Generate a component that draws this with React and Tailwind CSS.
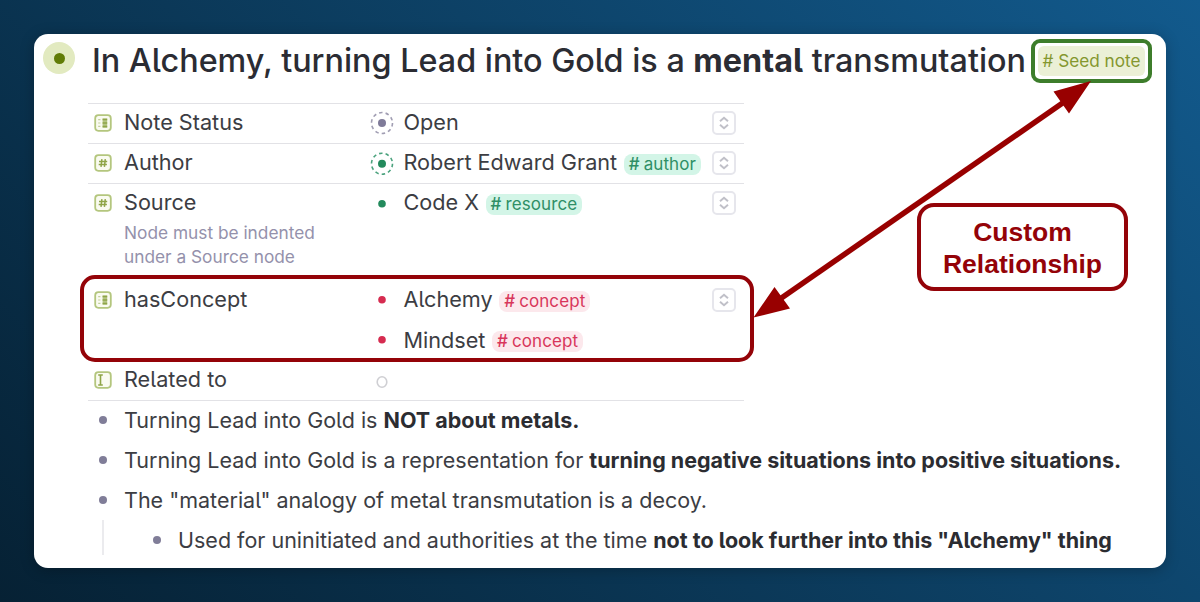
const FIELDS = [
  { name: 'Note Status', icon: 'options', values: [{ text: 'Open', dot: 'gray' }], menu: true },
  { name: 'Author', icon: 'tag', values: [{ text: 'Robert Edward Grant', tag: 'author', dot: 'ref' }], menu: true },
  {
    name: 'Source',
    icon: 'tag',
    hint: ['Node must be indented', 'under a Source node'],
    values: [{ text: 'Code X', tag: 'resource', dot: 'green' }],
    menu: true,
  },
  {
    name: 'hasConcept',
    icon: 'options',
    highlighted: true,
    values: [
      { text: 'Alchemy', tag: 'concept', dot: 'red' },
      { text: 'Mindset', tag: 'concept', dot: 'red' },
    ],
    menu: true,
  },
  { name: 'Related to', icon: 'text', values: [{ dot: 'empty' }] },
]

const TAG_COLORS = {
  author: 'bg-[#d3f5e7] text-[#2f8f66]',
  resource: 'bg-[#d3f5e7] text-[#2f8f66]',
  concept: 'bg-[#fce8ec] text-[#d8365b]',
}

function FieldIcon({ type }) {
  return (
    <svg width="18" height="18" viewBox="0 0 18 18" fill="none" stroke="#8fa548" strokeWidth="1.2">
      <rect x="1.2" y="1.2" width="15.6" height="15.6" rx="3.2" stroke="#b4c67e" strokeWidth="1.8" fill="#fafbf1" />
      {type === 'options' && (
        <>
          <rect x="8.6" y="4.4" width="4.6" height="9.4" fill="#b5c584" stroke="none" />
          <path d="M8.600 5.600h4.600M8.600 9h4.600M8.600 12.400h4.600" strokeWidth="1.5" />
          <path d="M4.200 5.600h2.200M4.200 9h2.200M4.200 12.400h2.200" stroke="#c3d09a" />
        </>
      )}
      {type === 'tag' && <path d="M7.900 5.200 7 12.800M11.300 5.200l-.9 7.600M5 7.500h8.200M4.700 10.600h8.200" strokeWidth="1.5" />}
      {type === 'text' && <path d="M6.500 4v10M4.200 4h4.600M4.200 14h4.600" strokeWidth="1.6" />}
    </svg>
  )
}

function Dot({ type }) {
  return (
    <svg width="24" height="24" viewBox="0 0 24 24" fill="none">
      {type === 'gray' && (
        <>
          <circle cx="12" cy="12" r="10.5" stroke="#a19eb3" strokeWidth="1.6" strokeDasharray="3.5 3.1" />
          <circle cx="12" cy="12" r="4" fill="#7f7b99" />
        </>
      )}
      {type === 'ref' && (
        <>
          <circle cx="12" cy="12.700" r="10.5" stroke="#4aa27d" strokeWidth="1.6" strokeDasharray="3.5 3.1" />
          <circle cx="12" cy="12.700" r="4" fill="#238a5c" />
        </>
      )}
      {type === 'green' && <circle cx="12" cy="12.700" r="3.8" fill="#238a5c" />}
      {type === 'red' && <circle cx="12" cy="11.700" r="3.8" fill="#d62c50" />}
      {type === 'empty' && <ellipse cx="12" cy="14" rx="4.8" ry="5.2" stroke="#cfcfd3" strokeWidth="1.6" />}
    </svg>
  )
}

function Tag({ name }) {
  return (
    <span className={`mt-[3px] ml-[6.5px] flex h-[21px] items-center rounded-[8px] px-[5px] pt-px text-[17px] tracking-[0.1px] ${TAG_COLORS[name]}`}>
      <span className="mr-[4px] font-medium">#</span>
      {name}
    </span>
  )
}

function MenuButton() {
  return (
    <span className="mt-[7px] flex h-[24px] w-[24px] items-center justify-center rounded-[5px] border-2 border-[#e6e6ec]">
      <svg width="12" height="14" viewBox="0 0 12 14" fill="none" stroke="#c0c0c8" strokeWidth="2">
        <path d="M2 5.200 6 1.800l4 3.400M2 8.800 6 12.200l4-3.400" />
      </svg>
    </span>
  )
}

function Field({ field }) {
  return (
    <div className={`flex border-t pr-2 pl-[6px] ${field.highlighted ? 'border-transparent' : 'border-[#e2e2e6]'}`}>
      <div className="mt-[10px] w-[30px]">
        <FieldIcon type={field.icon} />
      </div>
      <div className="w-[246px]">
        <div className="h-[39px] leading-[37px]">{field.name}</div>
        {field.hint && (
          <div className="-mt-[2px] h-[59px] text-[17.3px] leading-[24px] text-[#9491ab]">
            {field.hint.map(line => <div key={line}>{line}</div>)}
          </div>
        )}
      </div>
      <div className="flex-1">
        {field.values.map((value, i) => (
          <div key={i} className="flex h-10 items-center first:h-[39px] first:pb-[2px]">
            <Dot type={value.dot} />
            <span className="ml-[9.5px]">{value.text}</span>
            {value.tag && <Tag name={value.tag} />}
          </div>
        ))}
      </div>
      {field.menu && <MenuButton />}
    </div>
  )
}

function Bullet({ children }) {
  return (
    <div className="flex h-10 items-center">
      <span className="mr-[17px] size-[8px] rounded-full bg-[#807d98]" />
      <span className="whitespace-nowrap">{children}</span>
    </div>
  )
}

function Strong({ children }) {
  return <b className="font-bold text-[#2b2c31]">{children}</b>
}

export default function App() {
  return (
    <div className="h-[602px] w-[1200px] overflow-hidden bg-linear-45 from-[#062134] to-[#125a8d] p-[34px]">
      <main className="relative h-[534px] rounded-[14px] bg-white font-[Inter,sans-serif] text-[21.65px] text-[#3c3d43] shadow-[0_2px_14px_rgba(0,0,0,0.25)] [font-feature-settings:'cv05']">
        <header className="flex h-[69px] items-start pt-[5px] pl-[9px]">
          <span className="mt-[3px] flex size-8 items-center justify-center rounded-full bg-[#e2eac0]">
            <span className="size-[11px] rounded-full bg-[#617c06]" />
          </span>
          <h1 className="ml-[17px] w-[939px] text-[32.35px] leading-[43px] font-medium whitespace-nowrap text-[#2b2c33]">
            In Alchemy, turning Lead into Gold is a <b className="font-bold">mental</b> transmutation
          </h1>
          <div className="h-[44px] w-[121px] shrink-0 rounded-[9px] border-4 border-[#3d7d2b] p-[3px]">
            <div className="flex h-[30px] items-center justify-center rounded-[6px] bg-[#ebf0d6] pb-px text-[17.2px] whitespace-nowrap text-[#84972f]">
              # Seed note
            </div>
          </div>
        </header>

        <section className="ml-[54px] w-[656px] border-b border-[#e2e2e6]">
          {FIELDS.map(field => <Field key={field.name} field={field} />)}
        </section>

        <section className="-mt-px pl-[65px] text-[21.5px]">
          <Bullet>Turning Lead into Gold is <Strong>NOT about metals.</Strong></Bullet>
          <Bullet>Turning Lead into Gold is a representation for <Strong>turning negative situations into positive situations.</Strong></Bullet>
          <Bullet>The "material" analogy of metal transmutation is a decoy.</Bullet>
          <div className="ml-[3px] h-[35px] border-l-2 border-[#ebebee] pl-[49px]">
            <Bullet>Used for uninitiated and authorities at the time <Strong>not to look further into this "Alchemy" thing</Strong></Bullet>
          </div>
        </section>

        {/* annotations over the note */}
        <div className="absolute top-[241px] left-[45.5px] h-[87px] w-[674px] rounded-[15px] border-4 border-[#940308]" />
        <div className="absolute top-[169px] left-[883px] flex h-[88px] w-[211px] items-center justify-center rounded-[17px] border-4 border-[#940308] bg-white pt-[2px] text-center font-['Liberation_Sans',sans-serif] text-[26.5px] leading-[32px] font-bold text-[#940308]">
          Custom<br />Relationship
        </div>
        <svg className="absolute top-0 left-0" width="1132" height="534" viewBox="34 34 1132 534" fill="#980000">
          <path d="M780 299 1064 102" stroke="#980000" strokeWidth="5.5" />
          <path d="M753.500 317.500 774.500 287 790 308.500ZM1091 81 1053.500 91.500 1069 113.500Z" />
        </svg>
      </main>
    </div>
  )
}
